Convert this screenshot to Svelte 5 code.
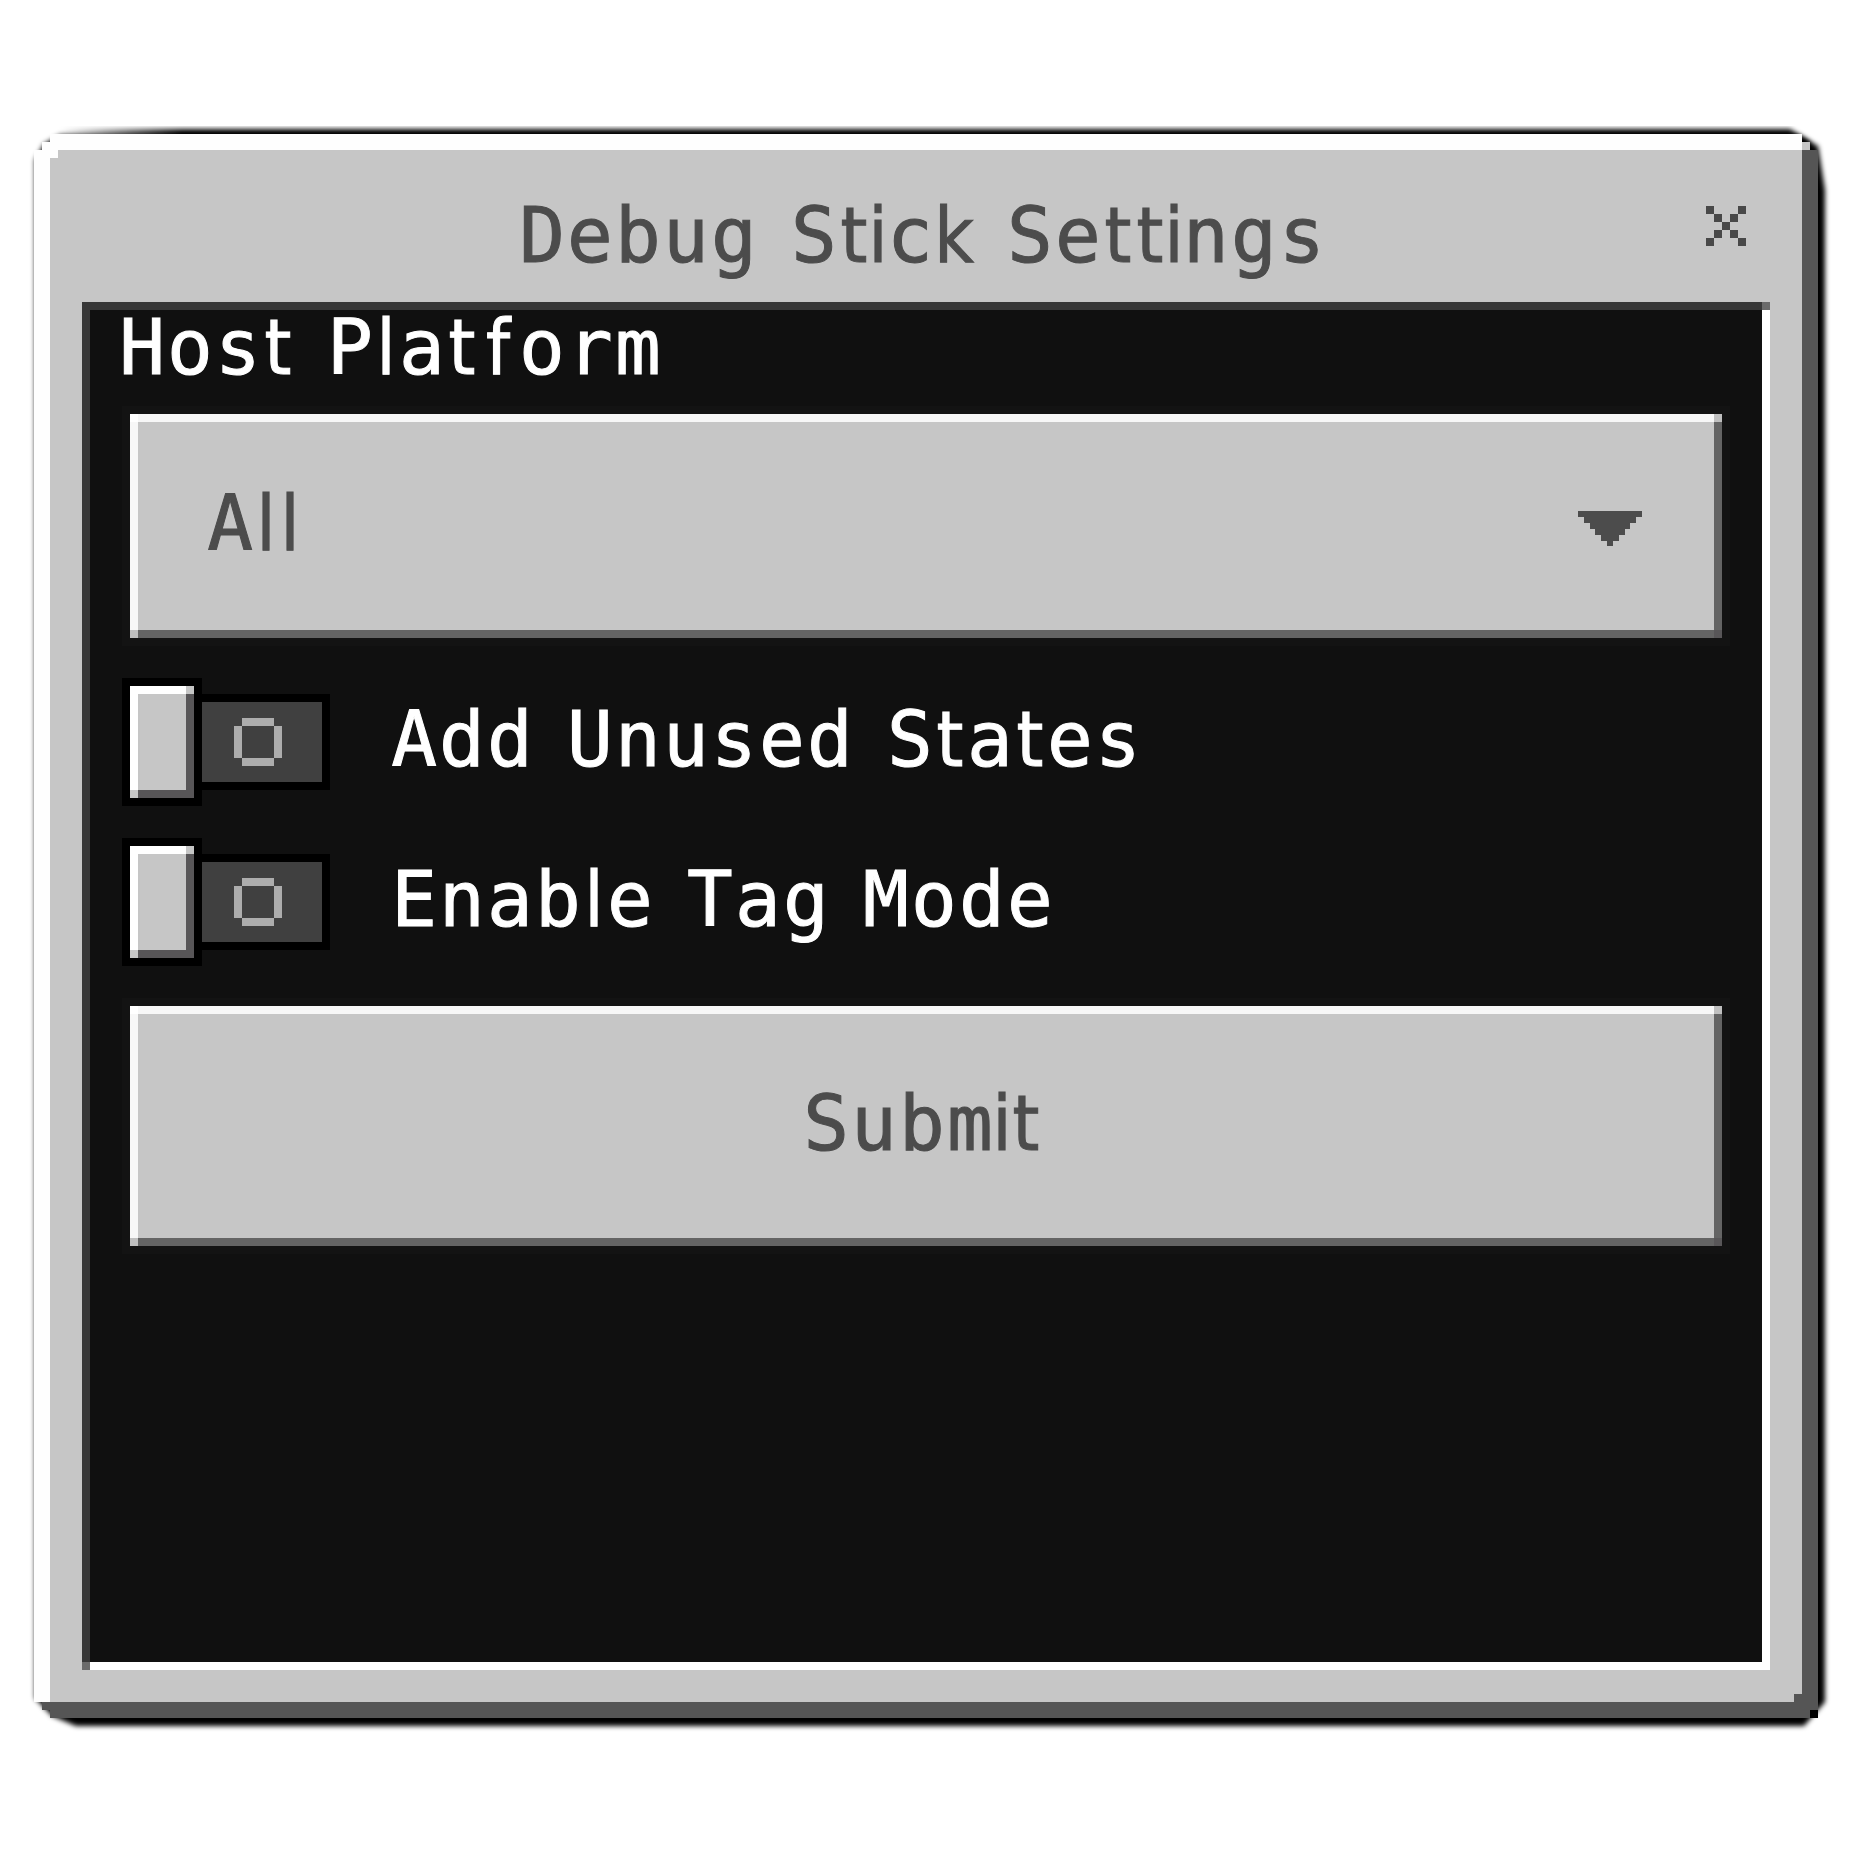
<script>
  // Advances are counted in font pixels; anything not listed is a full-width glyph.
  const advances = { i: 2, l: 3, t: 4, ' ': 4, f: 5, k: 5 };
  const unit = 8;

  const settings = [
    { label: 'Add Unused States', on: false },
    { label: 'Enable Tag Mode', on: false }
  ];

  function layout(text) {
    let cursor = 0;
    return [...text].map((char) => {
      const advance = advances[char] ?? 6;
      const x = (cursor + (advance - 1) / 2) * unit;
      cursor += advance;
      return { char, x, narrow: advance < 6 };
    });
  }

  function widthOf(text) {
    return ([...text].reduce((sum, char) => sum + (advances[char] ?? 6), 0) - 1) * unit;
  }
</script>

{#snippet label(text)}
  <svg class="label" width={widthOf(text)} height="56" role="img" aria-label={text}>
    <text y="56" xml:space="preserve">{#each layout(text) as glyph}<tspan x={glyph.x} class:narrow={glyph.narrow}>{glyph.char}</tspan>{/each}</text>
  </svg>
{/snippet}

<main class="screen">
  <section class="panel">
    <svg class="frame" width="1851" height="1851" viewBox="0 0 1851 1851" aria-hidden="true">
      <defs>
        <filter id="soft" x="-5%" y="-5%" width="110%" height="110%">
          <feGaussianBlur stdDeviation="2.5" />
        </filter>
        <linearGradient id="fade" x1="0" x2="1">
          <stop offset="0" stop-color="#000" stop-opacity="0" />
          <stop offset=".07" stop-color="#000" />
        </linearGradient>
      </defs>
      <path filter="url(#soft)" d="M35 160L44 144L60 135H1798L1818 146L1825 190V1702L1804 1726H76L52 1716L35 1698Z" />
      <path filter="url(#soft)" fill="url(#fade)" d="M60 129H1790L1810 142V180H60Z" />
      <g shape-rendering="crispEdges">
        <path fill="#fefefe" d="M50 134H1802V150H50V1702H34V150H42V142H50Z" />
        <path fill="#c6c6c6" d="M50 150H1802V1702H50Z" />
        <path fill="#fefefe" d="M50 150H58V158H50Z" />
        <path fill="#c6c6c6" d="M1802 142H1810V150H1802Z" />
        <path fill="#555" d="M1802 150H1818V1710H1810V1718H50V1710H42V1702H1794V1694H1802Z" />
        <path fill="#000" d="M1810 1710H1818V1718H1810Z" />
      </g>
    </svg>

    <header>
      <h1>{@render label('Debug Stick Settings')}</h1>
      <button class="close" aria-label="Close">
        <svg width="40" height="40" viewBox="0 0 5 5" shape-rendering="crispEdges">
          <path fill="#484848" d="M0 0h1v1H0zM4 0h1v1H4zM1 1h1v1H1zM3 1h1v1H3zM2 2h1v1H2zM1 3h1v1H1zM3 3h1v1H3zM0 4h1v1H0zM4 4h1v1H4z" />
        </svg>
      </button>
    </header>

    <div class="content">
      <div class="caption">{@render label('Host Platform')}</div>
      <button class="bevel select">
        {@render label('All')}
        <svg width="64" height="35" viewBox="0 0 64 35" shape-rendering="crispEdges">
          <path fill="#4c4c4c" d="M0 0H64V6H58V12H52V18H47V24H41V30H35V35H29V30H23V24H17V18H12V12H6V6H0Z" />
        </svg>
      </button>

      {#each settings as setting}
        <div class="setting">
          <button class="toggle" role="switch" aria-checked={setting.on} aria-label={setting.label}>
            <span class="bevel knob"></span>
            <span class="track">
              <svg width="48" height="48" viewBox="0 0 6 6" shape-rendering="crispEdges">
                <path fill="#adadad" d="M1 0h4v1H1zM0 1h1v4H0zM5 1h1v4H5zM1 5h4v1H1z" />
              </svg>
            </span>
          </button>
          {@render label(setting.label)}
        </div>
      {/each}

      <button class="bevel submit">{@render label('Submit')}</button>
    </div>
  </section>
</main>

<style>
  :global(body) {
    margin: 0;
    background: #fff;
  }

  .screen {
    box-sizing: border-box;
    width: 1851px;
    height: 1851px;
    padding: 134px 33px 133px 34px;
    overflow: hidden;
  }

  .panel {
    box-sizing: border-box;
    height: 1584px;
    padding: 16px 48px 48px;
    display: flex;
    flex-direction: column;
  }

  .frame {
    position: absolute;
    left: 0;
    top: 0;
    z-index: -1;
  }

  button {
    box-sizing: border-box;
    margin: 0;
    padding: 0;
    border: 0;
    background: none;
    color: inherit;
  }

  svg {
    display: block;
    flex: none;
  }

  .label {
    overflow: visible;
    font-family: 'DejaVu Sans Mono', monospace;
    font-size: 76px;
    font-weight: 400;
    fill: currentColor;
    stroke: currentColor;
    stroke-width: 1px;
    text-anchor: middle;
  }

  .narrow {
    font-family: 'DejaVu Sans Condensed', 'DejaVu Sans', sans-serif;
    font-stretch: condensed;
  }

  header {
    display: flex;
    height: 152px;
    flex: none;
    align-items: flex-start;
    justify-content: space-between;
    padding: 56px 24px 0 440px;
    box-sizing: border-box;
    color: #4c4c4c;
  }

  h1 {
    margin: 0;
    font-weight: 400;
  }

  .content {
    box-sizing: border-box;
    width: 1688px;
    height: 1368px;
    padding: 8px 48px 0 40px;
    border: 8px solid transparent;
    background:
      linear-gradient(#6a6a6a, #6a6a6a) right top / 8px 8px no-repeat border-box,
      linear-gradient(#6a6a6a, #6a6a6a) left bottom / 8px 8px no-repeat border-box,
      linear-gradient(#373737, #373737) left top / 100% 8px no-repeat border-box,
      linear-gradient(#373737, #373737) left top / 8px 100% no-repeat border-box,
      linear-gradient(#fff, #fff) right top / 8px 100% no-repeat border-box,
      linear-gradient(#fff, #fff) left bottom / 100% 8px no-repeat border-box,
      #101010;
    color: #fff;
  }

  .caption {
    margin-left: -8px;
    height: 96px;
  }

  .bevel {
    --light: #f7f7f7;
    --dark: #646464;
    --mid: #bfbfbf;
    --start: #fff;
    --end: #585658;
    background:
      linear-gradient(var(--start), var(--start)) left top / 8px 8px no-repeat,
      linear-gradient(var(--mid), var(--mid)) right top / 8px 8px no-repeat,
      linear-gradient(var(--mid), var(--mid)) left bottom / 8px 8px no-repeat,
      linear-gradient(var(--end), var(--end)) right bottom / 8px 8px no-repeat,
      linear-gradient(var(--light), var(--light)) left top / 100% 8px no-repeat,
      linear-gradient(var(--light), var(--light)) left top / 8px 100% no-repeat,
      linear-gradient(var(--dark), var(--dark)) right top / 8px 100% no-repeat,
      linear-gradient(var(--dark), var(--dark)) left bottom / 100% 8px no-repeat,
      #c6c6c6;
    box-shadow: 0 0 0 8px #131313;
    color: #4c4c4c;
  }

  .select {
    display: flex;
    width: 1592px;
    height: 224px;
    margin-bottom: 40px;
    padding: 80px 80px 0;
    align-items: flex-start;
    justify-content: space-between;
  }

  .select > svg:last-child {
    margin-top: 17px;
  }

  .setting {
    display: flex;
    height: 128px;
    margin: 0 0 32px -8px;
    align-items: flex-start;
    gap: 64px;
  }

  .setting > .label {
    margin-top: 32px;
  }

  .toggle {
    display: flex;
    width: 208px;
    height: 128px;
    align-items: center;
  }

  .knob {
    --light: #fff;
    --mid: #c6c6c6;
    --dark: #585658;
    box-sizing: border-box;
    width: 64px;
    height: 112px;
    margin: 8px;
    box-shadow: 0 0 0 8px #000;
    flex: none;
  }

  .track {
    display: flex;
    box-sizing: border-box;
    width: 128px;
    height: 96px;
    padding: 16px 0 0 32px;
    border: solid #000;
    border-width: 8px 8px 8px 0;
    background: #404040;
  }

  .submit {
    display: flex;
    width: 1592px;
    height: 240px;
    margin-top: 40px;
    padding: 88px 0 0 676px;
  }
</style>
